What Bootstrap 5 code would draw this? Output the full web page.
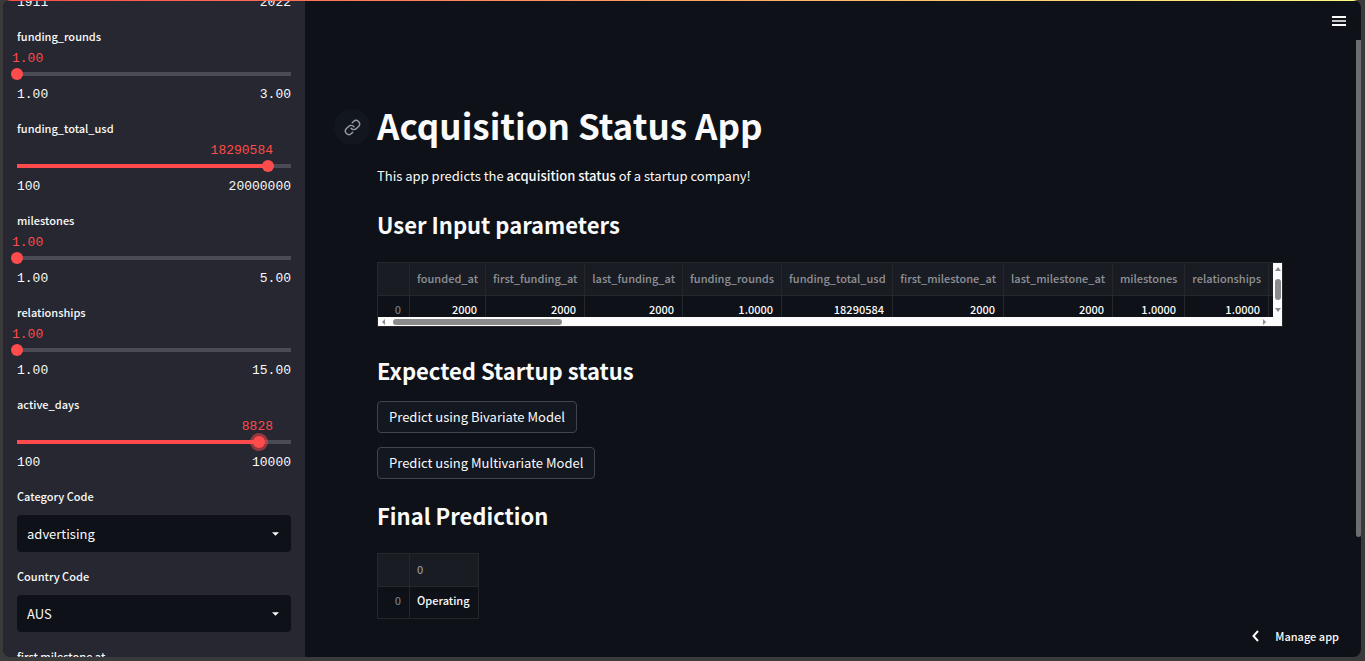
<!DOCTYPE html>
<html lang="en" data-bs-theme="dark">
<head>
<meta charset="utf-8">
<meta name="viewport" content="width=device-width, initial-scale=1">
<title>Acquisition Status App</title>
<link href="https://cdn.jsdelivr.net/npm/bootstrap@5.3.0/dist/css/bootstrap.min.css" rel="stylesheet">
<style>
  :root { --red: #ff4b4b; --ink: #fafafa; --page: #0e1117; --panel: #262730; --line: #25272d; }
  body { background: #3a3a3a; color: var(--ink); font: 400 13px/20px "Noto Sans CJK SC", "Noto Sans", sans-serif; }
  .frame { height: 100vh; padding: 0 4px 4px 3px; }
  .app { background: var(--page); border-radius: 8px; }
  .app::before { content: ""; position: absolute; inset: 0 0 auto; height: 1px; z-index: 3; background: linear-gradient(90deg, #ff4b4b, #fffd80); }

  .side { width: 302px; padding: 0 14px; background: var(--panel); }
  .fields { display: flex; flex-direction: column; gap: 14px; margin-top: -7px; }
  .side label { display: block; font-size: 11px; font-weight: 500; line-height: 18px; padding-bottom: 2px; }
  .mono { font-family: "Liberation Mono", monospace; font-size: 13px; line-height: 20px; }
  .readout { display: block; color: var(--red); line-height: 18px; margin-top: 3px; padding-right: 18px; text-align: right; }
  .readout.at-min { text-align: left; margin-left: -5px; padding: 0; }
  .slider { display: block; width: calc(100% + 12px); height: 12px; margin: 0 -6px 5px; border-radius: 0;
    background: linear-gradient(90deg, var(--red) var(--fill), #4a4b54 var(--fill)) center / calc(100% - 12px) 4px no-repeat; }
  .slider::-webkit-slider-runnable-track { background: transparent; height: 12px; }
  .slider::-webkit-slider-thumb { width: 12px; height: 12px; margin: 0; background: var(--red); border: 0; box-shadow: none; }
  .slider.active { overflow: visible; }
  .slider.active::-webkit-slider-thumb { box-shadow: 0 0 0 3px rgba(255, 75, 75, .5); }
  .pick { height: 37px; margin: 8px 0 1px; padding: 0 30px 0 10px; border: 0; border-radius: 4px; color: var(--ink); font-size: 13px;
    background: var(--page) url("data:image/svg+xml,%3Csvg xmlns='http://www.w3.org/2000/svg' viewBox='0 0 8 4'%3E%3Cpath d='M0 0h8L4 4z' fill='%23fafafa'/%3E%3C/svg%3E") right 12px center / 7px 4px no-repeat; }

  .content { padding: 104px 78px 0 72px; }
  .anchor-link { left: -43px; top: 5px; width: 36px; height: 36px; background: #12161e; color: #9a9ca1; }
  h1, h2 { color: var(--ink); margin: 0; }
  h1 { font-size: 35px; line-height: 42px; font-weight: 700; }
  h2 { font-size: 22px; line-height: 28px; font-weight: 700; }
  .intro { margin: 20px 0 24px; }
  .intro strong { font-weight: 500; }

  .frame-box { border: 1px solid var(--line); }
  .wide-grid { margin: 24px 0 29px; }
  .view { height: 54px; }
  .data { font-size: 11px; font-weight: 500; line-height: 20px; table-layout: fixed; border-collapse: separate; border-spacing: 0; }
  .data th, .data td { padding: 3px 8px 8px 7px; text-align: right; font-weight: 500; white-space: nowrap; border-right: 1px solid var(--line); }
  .data thead th { background: #1a1c24; color: #8f9196; padding: 5px 7px 7px; border-bottom: 1px solid var(--line); }
  .data tbody th { color: #74767b; }
  .data tr > :last-child { border-right: 0; }
  .c-idx { width: 32px; } .c-76 { width: 76px; } .c-99 { width: 99px; } .c-98 { width: 98px; }
  .c-111 { width: 111px; } .c-109 { width: 109px; } .c-72 { width: 72px; } .c-84 { width: 84px; }
  .wide { width: 994px; }
  .small-grid { width: 102px; margin-top: 24px; }
  .small-grid .data { width: 100px; }
  .small-grid .data tr > :last-child { text-align: left; }
  .bar-y { width: 9px; padding: 4px 0 5px; background: #fcfcfc; }
  .bar-x { height: 9px; padding: 0 12px 0 4px; background: #fcfcfc; }
  .bar-y i { width: 6px; height: 21px; border-radius: 3px; background: #8b8b8b; }
  .bar-x i { width: 169px; height: 6px; margin-left: 8px; border-radius: 3px; background: #8b8b8b; }
  .bar-x svg, .bar-y svg { fill: #8b8b8b; display: block; }

  .act { --bs-btn-color: var(--ink); --bs-btn-bg: #131720; --bs-btn-border-color: #41444c; --bs-btn-border-radius: 4px;
    --bs-btn-padding-x: 11px; --bs-btn-padding-y: 5px; --bs-btn-font-size: 13px; --bs-btn-line-height: 20px; }
  .acts { gap: 14px; margin: 17px 0 22px; }
  .plain { background: none; border: 0; padding: 0; color: var(--ink); }
  .menu { top: 15px; right: 15px; }
  .manage { right: 22px; bottom: 11px; gap: 16px; font-size: 11px; font-weight: 500; line-height: 20px; }
  .page-thumb { right: 0; top: 40px; bottom: 120px; width: 5px; border-radius: 0 0 3px 3px; background: #6c6d71; }
</style>
</head>
<body>
<div class="frame">
<div class="app d-flex position-relative overflow-hidden h-100">
  <aside class="side flex-shrink-0 overflow-hidden">
    <div class="fields">
      <div class="mono d-flex justify-content-between"><span>1911</span><span>2022</span></div>
      <div>
        <label for="rounds">funding_rounds</label>
        <output class="mono readout at-min" for="rounds">1.00</output>
        <input class="form-range slider" type="range" id="rounds" min="1" max="3" step="0.01" value="1" style="--fill:0%">
        <div class="mono d-flex justify-content-between"><span>1.00</span><span>3.00</span></div>
      </div>
      <div>
        <label for="total">funding_total_usd</label>
        <output class="mono readout" for="total">18290584</output>
        <input class="form-range slider" type="range" id="total" min="100" max="20000000" value="18290584" style="--fill:91.45%">
        <div class="mono d-flex justify-content-between"><span>100</span><span>20000000</span></div>
      </div>
      <div>
        <label for="miles">milestones</label>
        <output class="mono readout at-min" for="miles">1.00</output>
        <input class="form-range slider" type="range" id="miles" min="1" max="5" step="0.01" value="1" style="--fill:0%">
        <div class="mono d-flex justify-content-between"><span>1.00</span><span>5.00</span></div>
      </div>
      <div>
        <label for="rels">relationships</label>
        <output class="mono readout at-min" for="rels">1.00</output>
        <input class="form-range slider" type="range" id="rels" min="1" max="15" step="0.01" value="1" style="--fill:0%">
        <div class="mono d-flex justify-content-between"><span>1.00</span><span>15.00</span></div>
      </div>
      <div>
        <label for="days">active_days</label>
        <output class="mono readout" for="days">8828</output>
        <input class="form-range slider active" type="range" id="days" min="100" max="10000" value="8828" style="--fill:88.16%">
        <div class="mono d-flex justify-content-between"><span>100</span><span>10000</span></div>
      </div>
      <div>
        <label for="category">Category Code</label>
        <select class="form-select pick" id="category"><option>advertising</option></select>
      </div>
      <div>
        <label for="country">Country Code</label>
        <select class="form-select pick" id="country"><option>AUS</option></select>
      </div>
      <div>
        <label for="first">first milestone at</label>
        <input class="form-range slider" type="range" id="first" style="--fill:50%">
      </div>
    </div>
  </aside>

  <main class="content flex-grow-1 overflow-hidden">
    <div class="position-relative">
      <a class="anchor-link position-absolute rounded-circle d-flex align-items-center justify-content-center" href="#title" aria-label="Link to heading">
        <svg width="17" height="17" viewBox="0 0 24 24" fill="none" stroke="currentColor" stroke-width="2" stroke-linecap="round" stroke-linejoin="round"><path d="M10 13a5 5 0 0 0 7.54.54l3-3a5 5 0 0 0-7.07-7.07l-1.72 1.71"/><path d="M14 11a5 5 0 0 0-7.54-.54l-3 3a5 5 0 0 0 7.07 7.07l1.71-1.71"/></svg>
      </a>
      <h1 id="title">Acquisition Status App</h1>
    </div>
    <p class="intro">This app predicts the <strong>acquisition status</strong> of a startup company!</p>

    <h2>User Input parameters</h2>
    <div class="frame-box wide-grid">
      <div class="d-flex">
        <div class="view overflow-hidden flex-grow-1" style="width:0">
          <table class="data wide">
            <colgroup><col class="c-idx"><col class="c-76"><col class="c-99"><col class="c-98"><col class="c-99"><col class="c-111"><col class="c-111"><col class="c-109"><col class="c-72"><col class="c-84"><col></colgroup>
            <thead><tr><th></th><th>founded_at</th><th>first_funding_at</th><th>last_funding_at</th><th>funding_rounds</th><th>funding_total_usd</th><th>first_milestone_at</th><th>last_milestone_at</th><th>milestones</th><th>relationships</th><th></th></tr></thead>
            <tbody><tr><th>0</th><td>2000</td><td>2000</td><td>2000</td><td>1.0000</td><td>18290584</td><td>2000</td><td>2000</td><td>1.0000</td><td>1.0000</td><td></td></tr></tbody>
          </table>
        </div>
        <div class="bar-y d-flex flex-column align-items-center justify-content-between">
          <svg width="6" height="4"><path d="M0 4h6L3 0z"/></svg><i></i><svg width="6" height="4"><path d="M0 0h6L3 4z"/></svg>
        </div>
      </div>
      <div class="bar-x d-flex align-items-center">
        <svg width="3" height="6"><path d="M3 0v6L0 3z"/></svg><i></i><svg class="ms-auto me-1" width="3" height="6"><path d="M0 0v6l3-3z"/></svg>
      </div>
    </div>

    <h2>Expected Startup status</h2>
    <div class="acts d-flex flex-column align-items-start">
      <button class="btn act" type="button">Predict using Bivariate Model</button>
      <button class="btn act" type="button">Predict using Multivariate Model</button>
    </div>

    <h2>Final Prediction</h2>
    <div class="frame-box small-grid">
      <table class="data">
        <colgroup><col class="c-idx"><col></colgroup>
        <thead><tr><th></th><th>0</th></tr></thead>
        <tbody><tr><th>0</th><td>Operating</td></tr></tbody>
      </table>
    </div>
  </main>

  <button class="plain menu position-absolute d-flex" type="button" aria-label="Menu">
    <svg width="14" height="12"><path d="M0 1h14v2H0zM0 9h14v2H0z" fill="#fafafa"/><path d="M0 5h14v2H0z" fill="#c4c5c7"/></svg>
  </button>
  <button class="plain manage position-absolute d-flex align-items-center" type="button">
    <svg width="7" height="12" fill="none" stroke="#fafafa" stroke-width="2"><path d="M6 1L1.500 6L6 11"/></svg>
    <span>Manage app</span>
  </button>
  <div class="page-thumb position-absolute"></div>
</div>
</div>
<script src="https://cdn.jsdelivr.net/npm/bootstrap@5.3.0/dist/js/bootstrap.bundle.min.js"></script>
</body>
</html>
